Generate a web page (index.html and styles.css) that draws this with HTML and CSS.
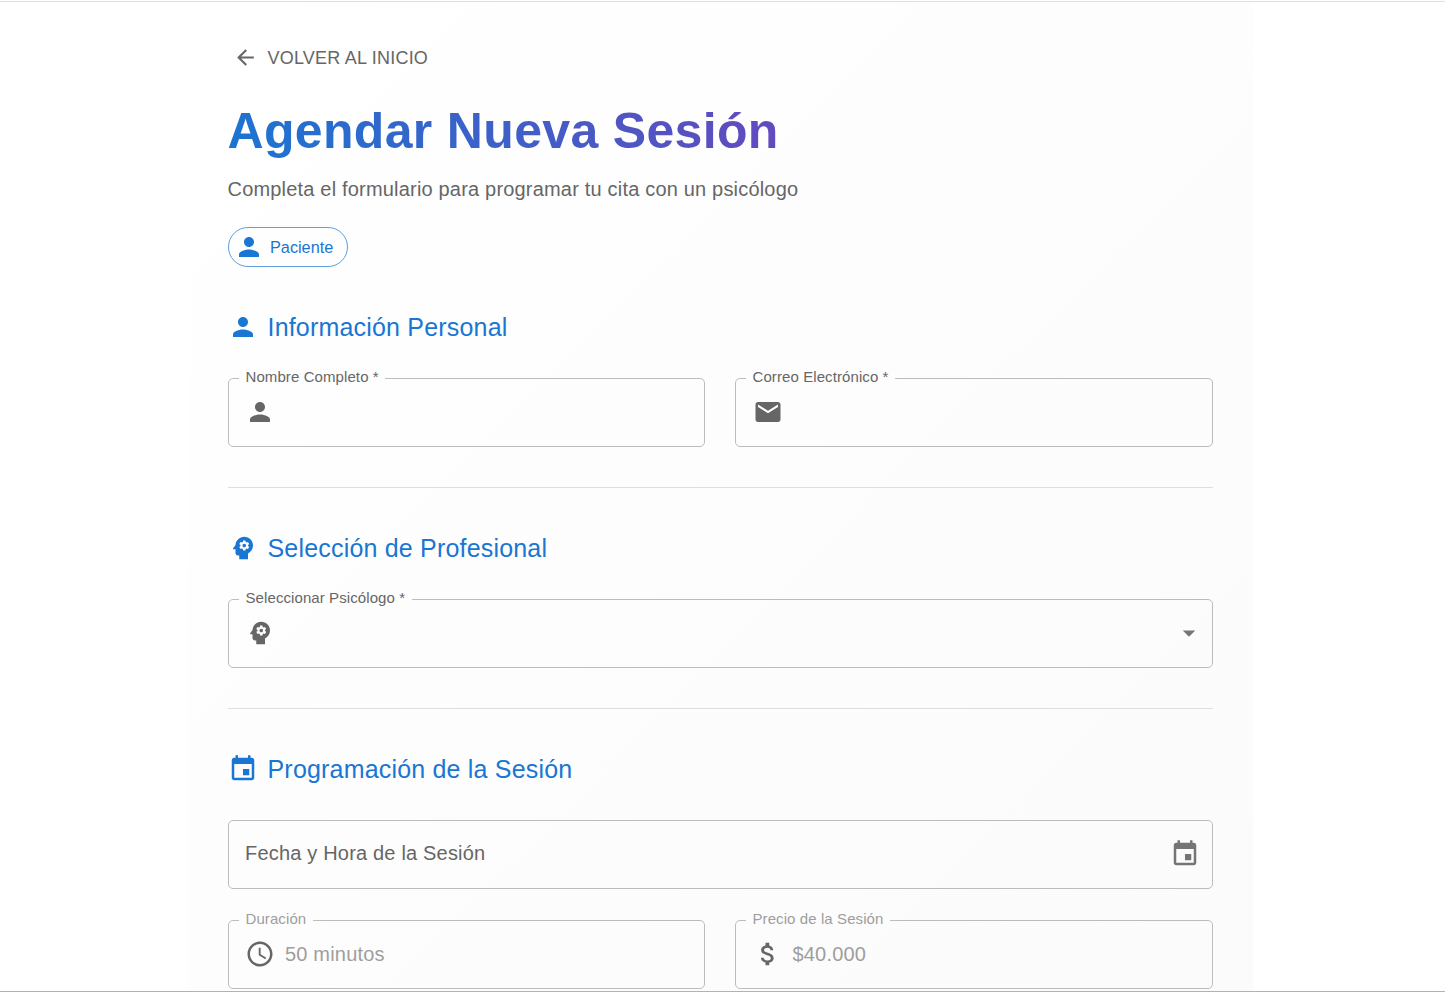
FILE: index.html
```html
<!DOCTYPE html>
<html lang="es">
<head>
<meta charset="utf-8">
<title>Agendar Nueva Sesión</title>
<link rel="stylesheet" href="styles.css">
</head>
<body>
<svg class="sprite" width="0" height="0">
  <symbol id="person" viewBox="0 0 24 24"><path d="M12 12c2.21 0 4-1.79 4-4s-1.79-4-4-4-4 1.79-4 4 1.79 4 4 4zm0 2c-2.67 0-8 1.34-8 4v2h16v-2c0-2.66-5.33-4-8-4z"/></symbol>
  <symbol id="back" viewBox="0 0 24 24"><path d="M20 11H7.83l5.59-5.59L12 4l-8 8 8 8 1.41-1.41L7.83 13H20v-2z"/></symbol>
  <symbol id="email" viewBox="0 0 24 24"><path d="M20 4H4c-1.1 0-1.99.9-1.99 2L2 18c0 1.1.9 2 2 2h16c1.1 0 2-.9 2-2V6c0-1.1-.9-2-2-2zm0 4l-8 5-8-5V6l8 5 8-5v2z"/></symbol>
  <symbol id="psychology" viewBox="0 0 24 24"><path d="M13 8.57c-.79 0-1.43.64-1.43 1.43s.64 1.43 1.43 1.43 1.43-.64 1.43-1.43-.64-1.43-1.43-1.43z"/><path d="M13 3C9.25 3 6.2 5.94 6.02 9.64L4.1 12.2c-.25.33-.01.8.4.8H6v3c0 1.1.9 2 2 2h1v3h7v-4.68c2.36-1.12 4-3.53 4-6.32 0-3.87-3.13-7-7-7zm3 7c0 .13-.01.26-.02.39l.83.66c.08.06.1.16.05.25l-.8 1.39c-.05.09-.16.12-.24.09l-.99-.4c-.21.16-.43.29-.67.39L14 13.83c-.01.1-.1.17-.2.17h-1.6c-.1 0-.18-.07-.2-.17l-.15-1.06c-.25-.1-.47-.23-.68-.39l-.99.4c-.09.03-.2 0-.25-.09l-.8-1.39c-.05-.08-.03-.19.05-.25l.84-.66c-.01-.13-.02-.26-.02-.39s.02-.27.04-.39l-.85-.66c-.08-.06-.1-.16-.05-.26l.8-1.38c.05-.09.15-.12.24-.09l1 .4c.2-.15.43-.29.67-.39L12 6.17c.02-.1.1-.17.2-.17h1.6c.1 0 .18.07.2.17l.15 1.06c.24.1.46.23.67.39l1-.4c.09-.03.2 0 .24.09l.8 1.38c.05.09.03.2-.05.26l-.85.66c.03.12.04.25.04.39z"/></symbol>
  <symbol id="event" viewBox="0 0 24 24"><path d="M17 12h-5v5h5v-5zM16 1v2H8V1H6v2H5c-1.11 0-1.99.9-1.99 2L3 19c0 1.1.89 2 2 2h14c1.1 0 2-.9 2-2V5c0-1.1-.9-2-2-2h-1V1h-2zm3 18H5V8h14v11z"/></symbol>
  <symbol id="clock" viewBox="0 0 24 24"><path d="M11.99 2C6.47 2 2 6.48 2 12s4.47 10 9.99 10C17.52 22 22 17.52 22 12S17.52 2 11.99 2zM12 20c-4.42 0-8-3.58-8-8s3.58-8 8-8 8 3.58 8 8-3.58 8-8 8z"/><path d="M12.5 7H11v6l5.25 3.15.75-1.23-4.5-2.67z"/></symbol>
  <symbol id="money" viewBox="0 0 24 24"><path d="M11.8 10.9c-2.27-.59-3-1.2-3-2.15 0-1.09 1.01-1.85 2.7-1.85 1.78 0 2.44.85 2.5 2.1h2.21c-.07-1.72-1.12-3.3-3.21-3.81V3h-3v2.16c-1.94.42-3.5 1.68-3.5 3.61 0 2.31 1.91 3.46 4.7 4.13 2.5.6 3 1.48 3 2.41 0 .69-.49 1.79-2.7 1.79-2.06 0-2.87-.92-2.98-2.1h-2.2c.12 2.19 1.76 3.42 3.68 3.83V21h3v-2.15c1.95-.37 3.5-1.5 3.5-3.55 0-2.84-2.43-3.81-4.7-4.4z"/></symbol>
  <symbol id="drop" viewBox="0 0 24 24"><path d="M7 10l5 5 5-5z"/></symbol>
</svg>
<main class="page">
  <div class="paper">
    <a class="back"><svg class="icon icon-small"><use href="#back"/></svg><span class="back-text">VOLVER AL INICIO</span></a>
    <h1 class="title"><span class="title-text">Agendar Nueva Sesión</span></h1>
    <p class="subtitle">Completa el formulario para programar tu cita con un psicólogo</p>
    <div class="chip"><svg class="icon"><use href="#person"/></svg><span>Paciente</span></div>

    <section class="section">
      <h2 class="heading"><svg class="icon"><use href="#person"/></svg><span>Información Personal</span></h2>
      <div class="row two">
        <fieldset class="field"><legend>Nombre Completo *</legend>
          <div class="control"><svg class="icon"><use href="#person"/></svg></div></fieldset>
        <fieldset class="field"><legend>Correo Electrónico *</legend>
          <div class="control"><svg class="icon"><use href="#email"/></svg></div></fieldset>
      </div>
    </section>

    <section class="section divided">
      <h2 class="heading"><svg class="icon"><use href="#psychology"/></svg><span>Selección de Profesional</span></h2>
      <div class="row">
        <fieldset class="field"><legend>Seleccionar Psicólogo *</legend>
          <div class="control spread"><svg class="icon"><use href="#psychology"/></svg><svg class="icon arrow"><use href="#drop"/></svg></div></fieldset>
      </div>
    </section>

    <section class="section divided">
      <h2 class="heading"><svg class="icon"><use href="#event"/></svg><span>Programación de la Sesión</span></h2>
      <div class="date-field"><span>Fecha y Hora de la Sesión</span><svg class="icon"><use href="#event"/></svg></div>
      <div class="row two disabled">
        <fieldset class="field"><legend>Duración</legend>
          <div class="control"><svg class="icon"><use href="#clock"/></svg><span>50 minutos</span></div></fieldset>
        <fieldset class="field"><legend>Precio de la Sesión</legend>
          <div class="control"><svg class="icon"><use href="#money"/></svg><span>$40.000</span></div></fieldset>
      </div>
    </section>
  </div>
</main>
</body>
</html>
```

FILE: styles.css
```css
* { box-sizing: border-box; }
body {
  margin: 0;
  background: #fff;
  color: #666;
  font-family: "Liberation Sans", Arial, sans-serif;
  font-size: 20px;
  letter-spacing: 0.00938em;
}
.sprite { display: none; }
.page {
  height: 992px;
  padding-top: 1px;
  padding-left: 188px;
  overflow: hidden;
  border-bottom: 1px solid #b3b3a9;
  background: linear-gradient(#e0e0e0, #e0e0e0) 0 1px / 100% 1px no-repeat;
}
.paper {
  width: 1065px;
  height: 989px;
  margin-top: 1px;
  padding: 35px 40px 0;
  background: linear-gradient(135deg, #fff 0%, #fbfbfb 100%);
}
.icon { width: 30px; height: 30px; flex: none; fill: currentColor; }
.icon-small { width: 25px; height: 25px; }
.back {
  display: flex;
  align-items: center;
  gap: 9.5px;
  height: 41px;
  padding-left: 5px;
  font-size: 18px;
  letter-spacing: 0.22px;
}
.back-text { padding-top: 1px; }
.title {
  margin: 23px 0 13px -0.5px;
  font-size: 50px;
  line-height: 60px;
  letter-spacing: 0.33px;
}
.title-text {
  display: block;
  background: linear-gradient(45deg, #1976d2 0%, #9c27b0 100%);
  -webkit-background-clip: text;
  background-clip: text;
  color: transparent;
}
.subtitle { margin: 0 0 23px -0.5px; line-height: 30px; }
.chip {
  display: flex;
  align-items: center;
  gap: 6px;
  width: 120px;
  height: 40px;
  padding-left: 5px;
  border: 1px solid rgba(25, 118, 210, 0.7);
  border-radius: 20px;
  color: #1976d2;
  font-size: 16.25px;
  letter-spacing: 0;
}
.section { margin-top: 45px; }
.divided {
  margin-top: 40px;
  padding-top: 45px;
  border-top: 1px solid #dedede;
}
.heading {
  display: flex;
  align-items: center;
  gap: 9.5px;
  height: 30px;
  margin: 0 0 29px;
  color: #1976d2;
  font-size: 25px;
  font-weight: 400;
  letter-spacing: 0.0075em;
}
.row { display: grid; gap: 30px; }
.two { grid-template-columns: 477px 478px; }
.field {
  min-width: 0;
  height: 76px;
  margin: 0;
  padding: 0 16px 0 10px;
  border: 1px solid #bcbcbc;
  border-radius: 5px;
}
.field legend {
  height: 15px;
  padding: 0 6.5px;
  font-size: 15px;
  line-height: 11px;
  letter-spacing: 0.09px;
}
.control {
  display: flex;
  align-items: center;
  gap: 10px;
  height: 51px;
  padding-left: 6px;
}
.control span { padding-top: 1px; }
.two .field:nth-child(2) .control { padding-left: 6.5px; }
.spread { justify-content: space-between; }
.arrow { margin-right: -8px; color: #757575; }
.date-field {
  display: flex;
  align-items: center;
  justify-content: space-between;
  height: 69px;
  margin: 36px 0 24px;
  padding: 0 12px 2px 16px;
  border: 1px solid #bcbcbc;
  border-radius: 5px;
}
.date-field .icon { color: #757575; }
.disabled legend, .disabled span { color: #9e9e9e; }
```
